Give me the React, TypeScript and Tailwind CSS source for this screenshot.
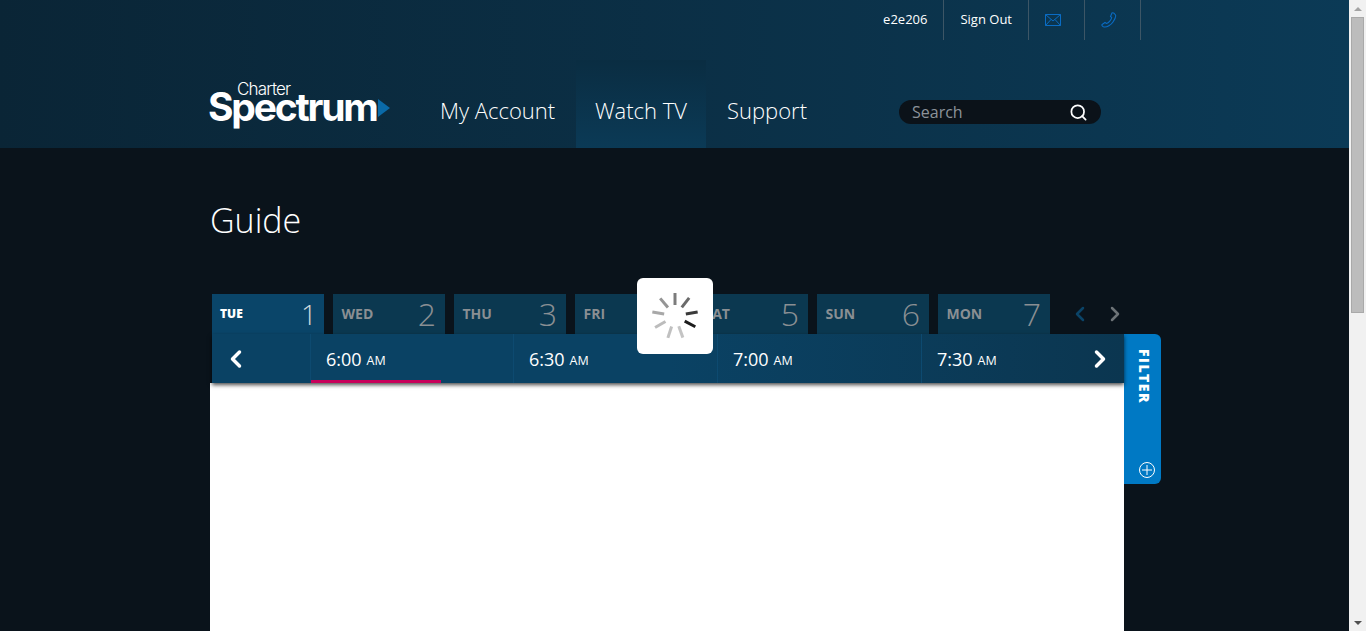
import { ChevronLeft, ChevronRight, Search } from "lucide-react";

const days = [
  { name: "TUE", num: 1, active: true },
  { name: "WED", num: 2 },
  { name: "THU", num: 3 },
  { name: "FRI", num: 4 },
  { name: "SAT", num: 5 },
  { name: "SUN", num: 6 },
  { name: "MON", num: 7 },
];

const times = [
  { label: "6:00", width: "w-[203px]", current: true },
  { label: "6:30", width: "w-[204px]" },
  { label: "7:00", width: "w-[204px]" },
  { label: "7:30", width: "w-[165px]" },
];

const spokes = [
  { angle: 0, color: "#7c7c7c" },
  { angle: 38, color: "#6a6a6a" },
  { angle: 80, color: "#3a3a3a" },
  { angle: 118, color: "#1c1c1c" },
  { angle: 160, color: "#c4c4c4" },
  { angle: 198, color: "#c0c0c0" },
  { angle: 240, color: "#bcbcbc" },
  { angle: 280, color: "#a8a8a8" },
  { angle: 320, color: "#959595" },
];

const Logo = () => (
  <div className="relative w-[180px] h-[48px] text-white font-['Inter',sans-serif]">
    <span className="absolute left-[27px] top-[-3px] text-[17px] leading-[18px] font-light tracking-[-0.8px]">Charter</span>
    <span className="absolute left-[-2px] top-[2px] text-[39px] leading-[44px] font-bold tracking-[-2.2px]">Spectrum</span>
    <svg className="absolute left-[168px] top-[16px]" width="12" height="18" viewBox="0 0 12 18">
      <path d="M0 0 L12 9 L0 18 Z" fill="#0a6aa8" />
    </svg>
  </div>
);

const Header = () => (
  <header className="h-[148px] bg-gradient-to-r from-[#0a2536] to-[#0b3a56]">
    <div className="flex justify-end h-10 pr-[208px] text-[13px] font-medium text-white">
      <div className="flex items-center pr-4 border-r border-[#3d5666]">e2e206</div>
      <div className="flex items-center px-4 border-r border-[#3d5666]">Sign Out</div>
      <div className="flex items-center w-[56px] pl-4 border-r border-[#3d5666]">
        <svg width="16" height="12" viewBox="0 0 16 12" fill="none" stroke="#0a6cc4" strokeWidth="1">
          <path d="M0.5 0.5 H15.5 V11.5 H0.5 Z M0.5 0.5 L8 7 L15.5 0.5 M0.5 11.5 L6 5.5 M15.5 11.5 L10 5.5" />
        </svg>
      </div>
      <div className="flex items-center w-[56px] pl-4 border-r border-[#3d5666]">
        <svg width="16" height="16" viewBox="0 0 16 16" fill="none" stroke="#0a6cc4" strokeWidth="1.1">
          <path d="M11 1 C12 0.5 13.5 1.5 14.5 3 C15 4 14 7 12 10 C10 13 6 15.5 3 15 C1.5 14.7 0.7 13.5 1 12.5 L4 10.5 L5.5 11.5 C7.5 11 10.5 7.5 10.7 5.5 L9.5 4.5 Z" />
        </svg>
      </div>
    </div>
    <div className="flex items-end h-[108px] pl-[210px]">
      <div className="self-start mt-[43px]">
        <Logo />
      </div>
      <nav className="flex h-[88px] ml-[50px] text-[22px] font-light text-white">
        <a className="flex items-center pt-[12px] w-[136px]">My Account</a>
        <a className="flex items-center justify-center pt-[12px] w-[130px] bg-gradient-to-b from-[#0a2d42] to-[#0b3a56]">Watch TV</a>
        <a className="flex items-center pt-[12px] pl-[21px] w-[193px]">Support</a>
      </nav>
      <div className="self-start mt-[60px] flex items-center justify-between w-[202px] h-6 pl-[13px] pr-[13px] rounded-full bg-[#0b1219] text-[16px] text-[#8c9299]">
        <span>Search</span>
        <Search className="size-[19px] text-white" strokeWidth={2.2} />
      </div>
    </div>
  </header>
);

const DayTabs = () => (
  <div className="flex items-center h-10 pl-[2px]">
    <div className="flex gap-[9px]">
      {days.map((d) => (
        <div
          key={d.name}
          className={
            d.active
              ? "flex items-center justify-between w-[112px] h-10 pl-2 pr-[7px] bg-[#0a4569] text-white"
              : "flex items-center justify-between w-[112px] h-10 pl-[8.5px] pr-[9px] bg-[#0b3850] text-[#8a8f93]"
          }
        >
          <span className={d.active ? "text-[12px] font-extrabold" : "-mt-[1px] text-[14px] font-bold"}>{d.name}</span>
          <span className={d.active ? "text-[28px] font-light text-[#cfd8dc]" : "text-[32px] font-light"}>{d.num}</span>
        </div>
      ))}
    </div>
    <ChevronLeft className="ml-[18px] size-6 text-[#0b4468]" strokeWidth={2.5} />
    <ChevronRight className="ml-[11px] size-6 text-[#6d7377]" strokeWidth={2.5} />
  </div>
);

const TimeBar = () => (
  <div className="relative z-10 flex h-[49px] ml-[2px] w-[912px] bg-gradient-to-r from-[#0a4264] via-[#0a4264] to-[#0b3650] shadow-[0_2px_4px_rgba(0,0,0,0.7)]">
    <div className="flex items-center w-[98px] pl-[10px] text-white">
      <ChevronLeft className="size-[28px]" strokeWidth={3} />
    </div>
    {times.map((t) => (
      <div key={t.label} className={`relative flex items-center pl-[15px] border-l border-[#0d4a70] ${t.width} text-white`}>
        <span className="mt-[2px] text-[18px]">{t.label}</span>
        <span className="ml-[5px] mt-[5px] text-[12.5px]">AM</span>
        {t.current && <div className="absolute left-0 bottom-0 w-[130px] h-[3px] bg-[#c8005a]" />}
      </div>
    ))}
    <div className="flex items-center text-white">
      <ChevronRight className="size-[28px]" strokeWidth={3} />
    </div>
  </div>
);

const FilterTab = () => (
  <div className="flex flex-col items-center justify-between w-[37px] h-[150px] pt-[15px] pb-[5px] bg-[#0079c4] rounded-r-[6px] text-white">
    <span className="ml-[3px] [writing-mode:vertical-rl] text-[14px] font-extrabold tracking-[1.5px]">FILTER</span>
    <svg className="ml-[9px]" width="18" height="18" viewBox="0 0 18 18" fill="none" stroke="white" strokeWidth="1">
      <circle cx="9" cy="9" r="7.5" />
      <path d="M9 4 V14 M4 9 H14" />
    </svg>
  </div>
);

const Spinner = () => (
  <div className="absolute z-20 left-[637px] top-[278px] w-[76px] h-[76px] rounded-[6px] bg-white">
    <svg width="76" height="76" viewBox="0 0 76 76">
      {spokes.map((s) => (
        <line
          key={s.angle}
          x1="38"
          y1="27"
          x2="38"
          y2="15"
          stroke={s.color}
          strokeWidth="3"
          transform={`rotate(${s.angle} 38 38)`}
        />
      ))}
    </svg>
  </div>
);

const Scrollbar = () => (
  <aside className="flex flex-col justify-between w-[17px] h-full bg-[#f1f1f1]">
    <div>
      <div className="flex justify-center items-center h-[17px]">
        <div className="w-0 h-0 border-x-[4px] border-x-transparent border-b-[4px] border-b-[#a3a3a3]" />
      </div>
      <div className="mx-[2px] h-[296px] bg-[#bcbcbc] border border-[#a9a9a9]" />
    </div>
    <div className="flex justify-center items-center h-[17px]">
      <div className="w-0 h-0 border-x-[4px] border-x-transparent border-t-[4px] border-t-[#505050]" />
    </div>
  </aside>
);

export default function App() {
  return (
    <div className="relative flex h-[631px] overflow-hidden bg-[#0a131b] font-['Open_Sans',sans-serif]">
      <main className="flex-1 min-w-0">
        <Header />
        <div className="pl-[210px]">
          <h1 className="pt-[49px] h-[146px] text-[34px] leading-[46px] font-light text-white">Guide</h1>
          <DayTabs />
          <div className="flex">
            <div className="w-[914px]">
              <TimeBar />
              <div className="h-[248px] bg-white" />
            </div>
            <FilterTab />
          </div>
        </div>
      </main>
      <Scrollbar />
      <Spinner />
    </div>
  );
}
